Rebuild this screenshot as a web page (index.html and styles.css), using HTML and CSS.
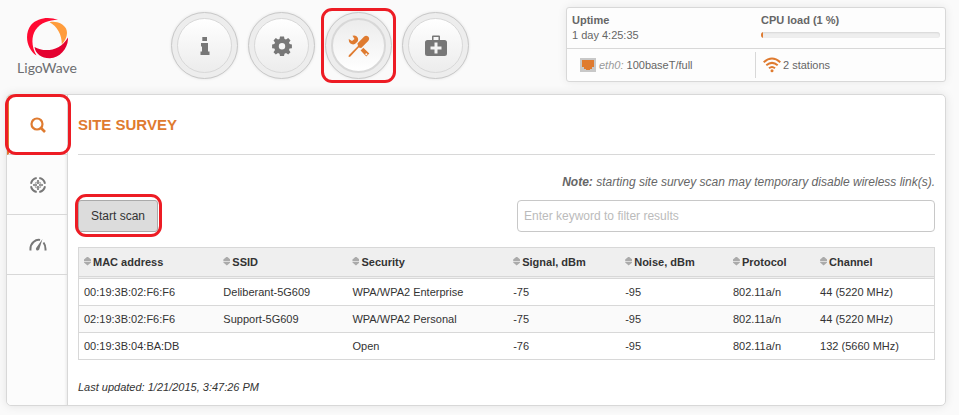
FILE: index.html
```html
<!DOCTYPE html>
<html lang="en">

<head>
  <meta charset="UTF-8">
  <meta name="viewport" content="width=device-width, initial-scale=1.0">
  <title>LigoWave - Site survey</title>
  <link rel="stylesheet" href="styles.css">
</head>

<body>
  <!-- header -->
  <header class="header">
    <a class="logo" href="#">
      <svg class="logo-mark" viewBox="0 0 42 42" aria-hidden="true">
        <path fill="#ff0a32" d="M32 3C24-.5 12 0 5 8C-2 17 .5 32 10.500 38.500C5.500 30 5 20 9.500 13C14.500 5.500 23 3 32 3Z" />
        <path fill="#ff9c3c" d="M23.500 5.200C30 3.500 37 6.500 40 11.500C42.500 17 40 23 35.800 27.500C36 18 31.500 9.500 23.500 5.200Z" />
        <path fill="#e4002f" d="M8.500 30C18 35.500 34 34.500 42 20.500C42.500 31 34 41 24 41.300C16 41.500 9.500 37 8.500 30Z" />
      </svg>
      <span class="logo-text">LigoWave</span>
    </a>
    <nav class="main-nav">
      <button class="nav-btn" type="button" aria-label="Information">
        <span class="nav-face">
          <svg width="10" height="18" viewBox="0 0 10 18"><path d="M2.300 0h4.700v4H2.300zM1 6h7v8.500h1.500V18H.5v-3.500H2V9.500H1z" /></svg>
        </span>
      </button>
      <button class="nav-btn" type="button" aria-label="Settings">
        <span class="nav-face">
          <svg width="20" height="20" viewBox="0 0 20 20">
            <path fill-rule="evenodd" d="M8 .5h4l.5 2.500 1.500.6 2.200-1.500 2.300 2.300L17 6.500l.6 1.500 2.300.4v3.800l-2.300.4-.6 1.500 1.500 2.200-2.300 2.300-2.200-1.500-1.500.6-.5 2.300H8l-.5-2.300-1.500-.6-2.200 1.500-2.300-2.300L3 14.100l-.6-1.500-2.300-.4V8.400l2.300-.4L3 6.500 1.500 4.400l2.300-2.300L6 3.600 7.500 3zM10 7a3.200 3.200 0 1 0 0 6.400A3.200 3.200 0 0 0 10 7z" />
          </svg>
        </span>
      </button>
      <button class="nav-btn active marked" type="button" aria-label="Tools">
        <span class="nav-face">
          <svg width="22" height="22" viewBox="0 0 22 22">
            <path d="M.8 20.200L10 11l-.6-2.400 6.800-7.100q2-1.600 4.200.3 1.600 2-.2 4.200l-7 7-2.500-.6-8.300 9.100-1.800.7z" />
            <path d="M4.500.8Q8-.1 9.600 2.400q1 1.900.2 3.800l-.9 1-2 1.900q-2.700.9-4.800-.8Q.5 6.500.8 4l3.200 2 2.500-2z" />
            <path fill-rule="evenodd" d="M15.300 12.800l6 5.700-3 3-5.700-6zM18.300 18.200a1 1 0 1 0 .1 2 1 1 0 0 0-.1-2z" />
          </svg>
        </span>
      </button>
      <button class="nav-btn" type="button" aria-label="Support">
        <span class="nav-face">
          <svg width="24" height="22" viewBox="0 0 24 22">
            <path fill-rule="evenodd" d="M8 5V1.500Q8 .5 9 .5h6q1 0 1 1V5h4.500Q23 5 23 7.500v11q0 2.500-2.500 2.500h-17Q1 21 1 18.500v-11Q1 5 3.500 5zM9.500 2v3h5V2zM10.500 7.500v4h-4v3h4v4h3v-4h4v-3h-4v-4z" />
          </svg>
        </span>
      </button>
    </nav>
    <section class="status">
      <div class="status-row">
        <div class="status-cell">
          <strong>Uptime</strong>
          <span>1 day 4:25:35</span>
        </div>
        <div class="status-cell">
          <strong>CPU load (1 %)</strong>
          <div class="bar"><div class="bar-fill" style="width: 1%"></div></div>
        </div>
      </div>
      <div class="status-row links">
        <div class="status-cell">
          <svg width="16" height="14" viewBox="0 0 16 14"><path fill="#c8c8c8" d="M0 0h16v14H0z" /><path fill="#df7b30" d="M2 2h12v7h-2v2h-2v1H6v-1H4V9H2z" /></svg>
          <span><em>eth0:</em> 100baseT/full</span>
        </div>
        <div class="status-cell">
          <svg width="18" height="16" viewBox="0 0 18 16" fill="none" stroke="#df7b30" stroke-width="2">
            <path d="M.7 5.200q8.300-7.400 16.600 0M3.300 8.300q5.700-4.900 11.400 0M6 11.300q3-2.500 6 0" />
            <circle cx="9" cy="13.800" r="1.500" fill="#df7b30" stroke="none" />
          </svg>
          <span>2 stations</span>
        </div>
      </div>
    </section>
  </header>

  <!-- page -->
  <div class="page">
    <nav class="side-nav">
      <a class="side-item active marked" href="#" aria-label="Site survey">
        <svg width="16" height="16" viewBox="0 0 16 16" fill="none" stroke="currentColor"><circle cx="7" cy="7" r="5.500" stroke-width="2.200" /><path stroke-width="2.600" d="M10.500 10.500l4.500 4.500" /></svg>
      </a>
      <a class="side-item" href="#" aria-label="Antenna alignment">
        <svg width="18" height="18" viewBox="0 0 18 18" fill="none" stroke="currentColor">
          <path stroke-width="2" d="M10.300 2a7.100 7.100 0 0 1 5.700 5.700M16 10.300a7.100 7.100 0 0 1-5.700 5.700M7.700 16a7.100 7.100 0 0 1-5.700-5.700M2 7.700a7.100 7.100 0 0 1 5.700-5.700" />
          <path stroke-width="1.600" d="M9 4v4M9 10v4M4 9h4M10 9h4" />
          <path fill="currentColor" stroke="none" d="M5.500 7.500l2-2v2zM10.500 5.500l2 2h-2zM12.500 10.500l-2 2v-2zM7.500 12.500l-2-2h2z" />
        </svg>
      </a>
      <a class="side-item" href="#" aria-label="Speed test">
        <svg width="18" height="14" viewBox="0 0 18 14" fill="none" stroke="currentColor">
          <path stroke-width="2" d="M1.500 12.500Q1 7 4.500 4T11 2M14.500 4.500q2.300 3 2 8" />
          <path fill="currentColor" stroke="none" d="M13.500 1l-3.300 10.500q-1.200 1.700-2.700.8-1.200-1.200-.2-2.500z" />
        </svg>
      </a>
    </nav>
    <main class="content">
      <h1 class="title">Site survey</h1>
      <p class="note"><strong>Note:</strong> starting site survey scan may temporary disable wireless link(s).</p>
      <div class="toolbar">
        <button class="btn marked" type="button">Start scan</button>
        <input class="filter" type="text" placeholder="Enter keyword to filter results" aria-label="Filter results">
      </div>
      <table class="results">
        <colgroup>
          <col class="col-mac">
          <col class="col-ssid">
          <col class="col-security">
          <col class="col-signal">
          <col class="col-noise">
          <col class="col-protocol">
          <col class="col-channel">
        </colgroup>
        <thead>
          <tr>
            <th>MAC address</th>
            <th>SSID</th>
            <th>Security</th>
            <th>Signal, dBm</th>
            <th>Noise, dBm</th>
            <th>Protocol</th>
            <th>Channel</th>
          </tr>
        </thead>
        <tbody>
          <tr>
            <td>00:19:3B:02:F6:F6</td>
            <td>Deliberant-5G609</td>
            <td>WPA/WPA2 Enterprise</td>
            <td>-75</td>
            <td>-95</td>
            <td>802.11a/n</td>
            <td>44 (5220 MHz)</td>
          </tr>
          <tr>
            <td>02:19:3B:02:F6:F6</td>
            <td>Support-5G609</td>
            <td>WPA/WPA2 Personal</td>
            <td>-75</td>
            <td>-95</td>
            <td>802.11a/n</td>
            <td>44 (5220 MHz)</td>
          </tr>
          <tr>
            <td>00:19:3B:04:BA:DB</td>
            <td></td>
            <td>Open</td>
            <td>-76</td>
            <td>-95</td>
            <td>802.11a/n</td>
            <td>132 (5660 MHz)</td>
          </tr>
        </tbody>
      </table>
      <p class="updated">Last updated: 1/21/2015, 3:47:26 PM</p>
    </main>
  </div>
</body>

</html>
```
FILE: styles.css
```css
* {
  box-sizing: border-box;
}

body {
  margin: 0;
  padding: 7px 13px 9px 6px;
  background: #fafafa;
  color: #333;
  font-family: "Liberation Sans", Arial, sans-serif;
  font-size: 11px;
  line-height: 15px;
}

svg {
  display: block;
  flex: none;
}

button,
input {
  font-family: inherit;
}

/* header */
.header {
  display: flex;
  align-items: flex-start;
  margin-bottom: 12px;
}

.logo {
  width: 82px;
  padding-top: 10px;
  margin-right: 83px;
  display: flex;
  flex-direction: column;
  align-items: center;
  color: #6d6e71;
  text-decoration: none;
}

.logo-mark {
  width: 42px;
  height: 42px;
}

.logo-text {
  font-family: Lato, sans-serif;
  font-size: 14px;
  line-height: 18px;
}

.main-nav {
  display: flex;
  gap: 10px;
  padding-top: 5px;
}

.nav-btn {
  width: 67px;
  height: 67px;
  padding: 5px;
  border: 1px solid #c8c8c8;
  border-radius: 50%;
  background: #ededed;
  color: #777;
  position: relative;
  box-shadow: 0 0 3px rgba(0, 0, 0, .1);
}

.nav-face {
  width: 100%;
  height: 100%;
  display: flex;
  align-items: center;
  justify-content: center;
  border: 1px solid #d8d8d8;
  border-radius: 50%;
  background: linear-gradient(#fff, #ececec);
}

.nav-face svg {
  fill: currentColor;
}

.nav-btn.active {
  color: #df7b30;
}

.nav-btn.active .nav-face {
  background: linear-gradient(#ececec, #fff);
  border-width: 2px;
}

/* red frame over a control */
.marked {
  position: relative;
}

.marked::after {
  content: "";
  position: absolute;
  inset: -5px;
  border: 3px solid #ed1c24;
  border-radius: 11px;
  pointer-events: none;
  z-index: 1;
}

.status {
  width: 380px;
  margin-left: auto;
  background: #fdfdfd;
  border: 1px solid #d8d8d8;
  border-radius: 3px;
  box-shadow: 0 0 10px rgba(0, 0, 0, .08);
  color: #666;
}

.status-row {
  display: grid;
  grid-template-columns: 1fr 1fr;
  padding: 5px 0;
}

.status-row .status-cell {
  height: 30px;
  padding: 0 5px;
  display: flex;
  flex-direction: column;
}

.status-row.links {
  border-top: 1px solid #d8d8d8;
  padding: 3px 0;
}

.status-row.links .status-cell {
  height: 26px;
  flex-direction: row;
  align-items: center;
  gap: 3px;
}

.status-row.links .status-cell:first-child {
  padding-left: 13px;
  border-right: 1px solid #d8d8d8;
}

.status-row.links .status-cell:last-child {
  padding-left: 7px;
  gap: 2px;
}

.status em {
  color: #999;
}

.bar {
  height: 6px;
  margin-top: 4px;
  border-radius: 3px;
  background: #eee;
  box-shadow: inset 0 1px 2px rgba(0, 0, 0, .1);
  overflow: hidden;
}

.bar-fill {
  height: 100%;
  background: #df7b30;
}

/* page */
.page {
  display: flex;
  background: #fff;
  border: 1px solid #d8d8d8;
  border-radius: 5px;
  box-shadow: 0 0 10px rgba(0, 0, 0, .1);
}

.side-nav {
  width: 61px;
  flex: none;
  background: #fcfcfc;
  border-right: 1px solid #d8d8d8;
  border-radius: 5px 0 0 5px;
  box-shadow: inset -3px 0 3px -2px rgba(0, 0, 0, .08);
}

.side-item {
  height: 60px;
  padding-left: 2px;
  display: flex;
  align-items: center;
  justify-content: center;
  border-bottom: 1px solid #d8d8d8;
  color: #777;
}

.side-item.active {
  padding-left: 0;
  background: #fff;
  border-radius: 5px 0 0 0;
  border-left: 2px solid #df7b30;
  color: #df7b30;
}

.side-item.marked::after {
  inset: -1px -4px -1px -4px;
}

.content {
  flex: 1;
  min-width: 0;
  padding: 0 10px 10px;
}

.title {
  margin: 0;
  padding: 20px 0 19px;
  border-bottom: 1px solid #d8d8d8;
  color: #df7b30;
  font-size: 15px;
  line-height: 20px;
  text-transform: uppercase;
}

.note {
  margin: 18px 0 9px;
  color: #666;
  font-size: 12px;
  line-height: 18px;
  font-style: italic;
  text-align: right;
}

.toolbar {
  display: flex;
  justify-content: space-between;
  margin-bottom: 15px;
}

.btn {
  height: 32px;
  padding: 0 12px;
  border: 1px solid #aaa;
  border-radius: 3px;
  background: #dcdcdc;
  color: #333;
  font-size: 12px;
}

.btn.marked::after {
  inset: -7px -5px -6px -4px;
}

.filter {
  width: 418px;
  height: 32px;
  padding: 0 6px;
  border: 1px solid #c8c8c8;
  border-radius: 4px;
  background: #fff;
  color: #333;
  font-size: 12px;
}

.filter::placeholder {
  color: #bbb;
}

.results {
  width: 100%;
  table-layout: fixed;
  border: 1px solid #d8d8d8;
  border-bottom: 0;
  border-spacing: 0;
}

.col-mac {
  width: 16.3%;
}

.col-ssid {
  width: 15.1%;
}

.col-security {
  width: 18.8%;
}

.col-signal {
  width: 13.1%;
}

.col-noise {
  width: 12.6%;
}

.col-protocol {
  width: 10.2%;
}

.col-channel {
  width: 13.9%;
}

.results th,
.results td {
  height: 27px;
  padding: 0 5px;
  text-align: left;
  white-space: nowrap;
  border-bottom: 1px solid #d8d8d8;
}

.results th {
  height: 31px;
  background: #efefef;
  border-bottom: 3px double #d8d8d8;
}

/* sort arrows */
.results th::before {
  content: "";
  display: inline-block;
  width: 7px;
  height: 9px;
  margin-right: 2px;
  background: linear-gradient(#aaa 4px, #ddd 4px, #ddd 5px, #aaa 5px);
  clip-path: polygon(50% 0, 100% 34%, 100% 66%, 50% 100%, 0 66%, 0 34%);
}

.results tbody tr:nth-child(even) {
  background: #fafafa;
}

.updated {
  margin: 20px 0 0;
  font-style: italic;
}
```
